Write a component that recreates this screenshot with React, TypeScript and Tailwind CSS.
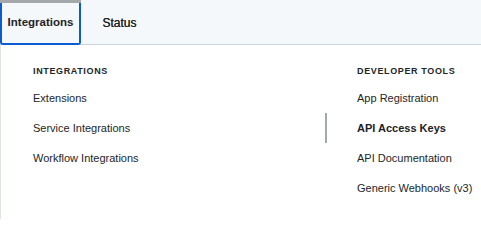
import React from "react";

const font = { fontFamily: "'Liberation Sans', Arial, sans-serif" };

export default function App() {
  const left = ["Extensions", "Service Integrations", "Workflow Integrations"];
  const right = ["App Registration", "API Access Keys", "API Documentation", "Generic Webhooks (v3)"];
  return (
    <div className="w-[481px] h-[219px] bg-white overflow-hidden text-[#1d2327]" style={font}>
      <div className="flex h-[45px] bg-[#f5f8fb] border-b border-[#c9d3dd]">
        <div className="relative w-[81px] h-[45px] -mb-px bg-[#f5f8fb] border-2 border-t-0 border-[#0b5cd0] rounded-b-[3px] flex items-center justify-center">
          <div className="absolute -top-0 -left-[2px] -right-[2px] h-[3px] bg-[#a3a8ab]" />
          <span className="text-[11.5px] font-bold text-[#1f2326] pt-[2px]">Integrations</span>
        </div>
        <div className="w-[77px] flex items-center justify-center">
          <span className="text-[12px] text-[#1f2326] pt-[2px] [text-shadow:0_0_0.3px_#1f2326]">Status</span>
        </div>
      </div>
      <div className="flex h-[174px]">
        <div className="w-[325px] border-l border-[#e2e4e6] pl-[32px] pt-[20px]">
          <div className="h-[14px] flex items-center text-[9px] font-bold tracking-[0.07em] text-[#22262a]">INTEGRATIONS</div>
          <div className="mt-[4px]">
            {left.map((t) => (
              <div key={t} className="h-[30px] flex items-center text-[11px] text-[#22262a]">{t}</div>
            ))}
          </div>
        </div>
        <div className="flex-1 pt-[20px]">
          <div className="h-[14px] flex items-center pl-[32px] text-[9px] font-bold tracking-[0.07em] text-[#22262a]">DEVELOPER TOOLS</div>
          <div className="mt-[4px]">
            {right.map((t) => {
              const active = t === "API Access Keys";
              return (
                <div
                  key={t}
                  className={
                    active
                      ? "h-[30px] flex items-center pl-[30px] border-l-2 border-[#a3aaae] text-[11px] font-bold text-[#1d2125]"
                      : "h-[30px] flex items-center pl-[30px] border-l-2 border-transparent text-[11px] text-[#22262a]"
                  }
                >
                  {t}
                </div>
              );
            })}
          </div>
        </div>
      </div>
    </div>
  );
}
